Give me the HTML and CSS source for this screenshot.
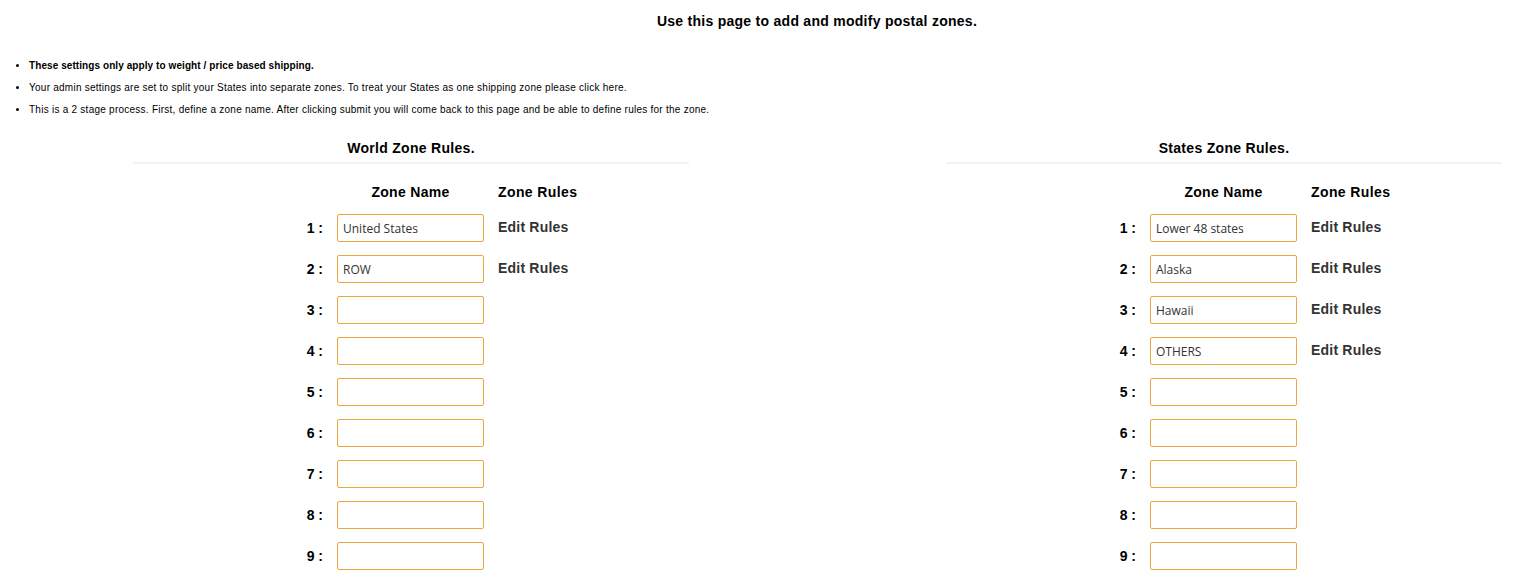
FILE: index.html
```html
<!DOCTYPE html>
<html>
<head>
<meta charset="utf-8">
<link rel="stylesheet" href="styles.css">
</head>
<body>
<div class="page">
  <h1 class="title">Use this page to add and modify postal zones.</h1>
  <ul class="notes">
    <li class="strong">These settings only apply to weight / price based shipping.</li>
    <li>Your admin settings are set to split your States into separate zones. To treat your States as one shipping zone please click here.</li>
    <li>This is a 2 stage process. First, define a zone name. After clicking submit you will come back to this page and be able to define rules for the zone.</li>
  </ul>
  <div class="panels">
    <section class="panel panel-world">
      <h2 class="panel-title">World Zone Rules.</h2>
      <div class="rule"></div>
      <div class="zones">
        <div class="hd-name">Zone Name</div><div class="hd-rules">Zone Rules</div>
        <div class="num">1 :</div><input class="zin" value="United States"><a class="edit">Edit Rules</a>
        <div class="num">2 :</div><input class="zin" value="ROW"><a class="edit">Edit Rules</a>
        <div class="num">3 :</div><input class="zin" value=""><span></span>
        <div class="num">4 :</div><input class="zin" value=""><span></span>
        <div class="num">5 :</div><input class="zin" value=""><span></span>
        <div class="num">6 :</div><input class="zin" value=""><span></span>
        <div class="num">7 :</div><input class="zin" value=""><span></span>
        <div class="num">8 :</div><input class="zin" value=""><span></span>
        <div class="num">9 :</div><input class="zin" value=""><span></span>
      </div>
    </section>
    <section class="panel panel-states">
      <h2 class="panel-title">States Zone Rules.</h2>
      <div class="rule"></div>
      <div class="zones">
        <div class="hd-name">Zone Name</div><div class="hd-rules">Zone Rules</div>
        <div class="num">1 :</div><input class="zin" value="Lower 48 states"><a class="edit">Edit Rules</a>
        <div class="num">2 :</div><input class="zin" value="Alaska"><a class="edit">Edit Rules</a>
        <div class="num">3 :</div><input class="zin" value="Hawaii"><a class="edit">Edit Rules</a>
        <div class="num">4 :</div><input class="zin" value="OTHERS"><a class="edit">Edit Rules</a>
        <div class="num">5 :</div><input class="zin" value=""><span></span>
        <div class="num">6 :</div><input class="zin" value=""><span></span>
        <div class="num">7 :</div><input class="zin" value=""><span></span>
        <div class="num">8 :</div><input class="zin" value=""><span></span>
        <div class="num">9 :</div><input class="zin" value=""><span></span>
      </div>
    </section>
  </div>
</div>
</body>
</html>
```
FILE: styles.css
```css
html, body {
  margin: 0;
  padding: 0;
  background: #fff;
}
body {
  font-family: "Liberation Sans", Arial, sans-serif;
  color: #000;
}
.page {
  width: 1514px;
}
.title {
  margin: 0;
  padding: 13px 0 0 120px;
  font-size: 14px;
  line-height: 16px;
  font-weight: bold;
  letter-spacing: 0.27px;
  text-align: center;
}
.notes {
  margin: 26px 0 0 0;
  padding: 0 0 0 29px;
  font-size: 10px;
  line-height: 22px;
  letter-spacing: 0.25px;
}
.notes li {
  list-style: disc;
}
.notes .strong {
  font-weight: bold;
  letter-spacing: 0.08px;
}
.panels {
  display: flex;
  margin-top: 17px;
}
.panel {
  width: 556px;
}
.panel-world {
  margin-left: 133px;
}
.panel-states {
  margin-left: 257px;
}
.panel-title {
  margin: 0;
  font-size: 14px;
  line-height: 20px;
  font-weight: bold;
  letter-spacing: 0.3px;
  text-align: center;
}
.rule {
  margin-top: 4px;
  border-top: 2px solid #f2f2f2;
}
.zones {
  display: grid;
  grid-template-columns: 190px 147px auto;
  column-gap: 14px;
  row-gap: 13px;
  margin-top: 18px;
  align-items: center;
}
.hd-name {
  grid-column: 2;
  text-align: center;
  font-size: 14px;
  line-height: 20px;
  font-weight: bold;
  letter-spacing: 0.3px;
  margin-bottom: -1px;
}
.hd-rules {
  grid-column: 3;
  font-size: 14px;
  line-height: 20px;
  font-weight: bold;
  letter-spacing: 0.4px;
  margin-bottom: -1px;
}
.num {
  text-align: right;
  font-size: 14px;
  font-weight: bold;
  line-height: 20px;
}
.zin {
  box-sizing: border-box;
  width: 147px;
  height: 28px;
  margin: 0;
  padding: 1px 5px 0 5px;
  border: 1px solid #e9a73d;
  border-radius: 2px;
  background: #fff;
  font-family: "Open Sans", "DejaVu Sans", sans-serif;
  font-size: 12px;
  color: #333;
  outline: none;
}
.edit {
  font-size: 14px;
  font-weight: bold;
  color: #333;
  line-height: 20px;
  letter-spacing: 0.2px;
  margin-top: -2px;
  text-decoration: none;
  cursor: pointer;
}
```
